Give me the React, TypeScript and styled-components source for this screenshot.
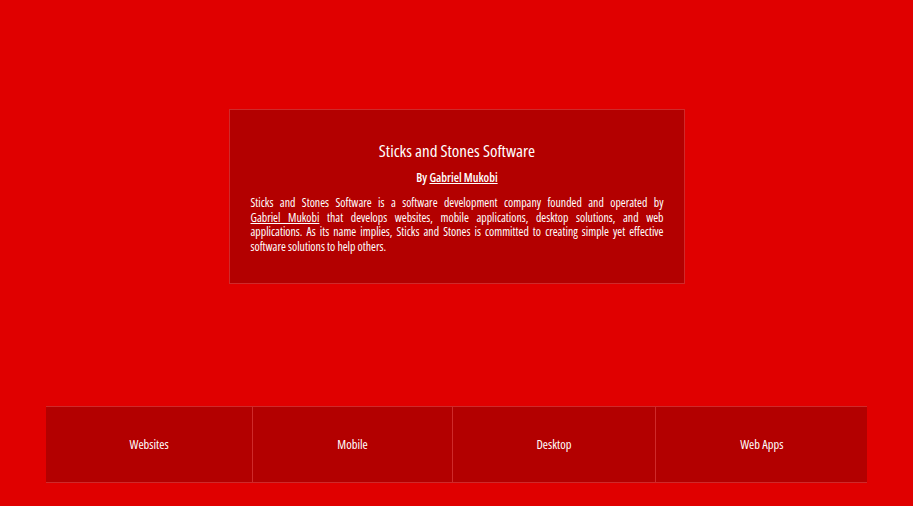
import React from "react";
import styled, { createGlobalStyle } from "styled-components";

const PALETTE = {
  page: "#e00000",
  panel: "#b30000",
  edge: "#cf2a2a",
  text: "#ffffff",
};

const GlobalStyle = createGlobalStyle`
  html, body {
    margin: 0;
    padding: 0;
    background: ${PALETTE.page};
  }
  body {
    font-family: "Open Sans", "DejaVu Sans Condensed", sans-serif;
    font-stretch: 75%;
    color: ${PALETTE.text};
  }
`;

const PageEl = styled.div`
  min-height: 506px;
  display: flex;
  flex-direction: column;
  align-items: center;
`;

const CardEl = styled.section`
  box-sizing: border-box;
  width: 456px;
  height: 175px;
  margin-top: 109px;
  padding: 31px 20px 0 21px;
  background: ${PALETTE.panel};
  border: 1px solid ${PALETTE.edge};
  text-align: center;
`;

const TitleEl = styled.h1`
  margin: 0;
  font-size: 17px;
  line-height: 20px;
  font-weight: 500;
  font-stretch: 78%;
`;

const BylineEl = styled.p`
  margin: 9px 0 0;
  font-size: 12px;
  line-height: 15px;
  font-weight: 600;
`;

const LinkEl = styled.a`
  color: ${PALETTE.text};
  text-decoration: underline;
`;

const BlurbEl = styled.p`
  margin: 10px 0 0;
  font-size: 11.8px;
  line-height: 14.7px;
  text-align: left;
`;

// the original wraps a touch differently than our fallback font would, so lines are set by hand
const LineEl = styled.span<{ $justify?: boolean }>`
  display: block;
  text-align: ${(p) => (p.$justify ? "justify" : "left")};
  text-align-last: ${(p) => (p.$justify ? "justify" : "left")};
`;

const ServicesEl = styled.nav`
  box-sizing: border-box;
  width: 90%;
  margin-top: 122px;
  display: flex;
  border-top: 1px solid ${PALETTE.edge};
  border-bottom: 1px solid ${PALETTE.edge};
`;

const ServiceEl = styled.div`
  flex: 1 1 auto;
  height: 75px;
  display: flex;
  align-items: center;
  justify-content: center;
  padding: 0 20px;
  background: ${PALETTE.panel};
  font-size: 12.5px;

  & + & {
    border-left: 1px solid ${PALETTE.edge};
  }
`;

const SERVICES = ["Websites", "Mobile", "Desktop", "Web Apps"];

export default function App() {
  return (
    <>
      <GlobalStyle />
      <PageEl>
        <CardEl>
          <TitleEl>Sticks and Stones Software</TitleEl>
          <BylineEl>
            By <LinkEl href="#">Gabriel Mukobi</LinkEl>
          </BylineEl>
          <BlurbEl>
            <LineEl $justify>
              Sticks and Stones Software is a software development company founded and operated by
            </LineEl>
            <LineEl $justify>
              <LinkEl href="#">Gabriel Mukobi</LinkEl> that develops websites, mobile applications,
              desktop solutions, and web
            </LineEl>
            <LineEl $justify>
              applications. As its name implies, Sticks and Stones is committed to creating simple yet
              effective
            </LineEl>
            <LineEl>software solutions to help others.</LineEl>
          </BlurbEl>
        </CardEl>
        <ServicesEl>
          {SERVICES.map((name) => (
            <ServiceEl key={name}>{name}</ServiceEl>
          ))}
        </ServicesEl>
      </PageEl>
    </>
  );
}
